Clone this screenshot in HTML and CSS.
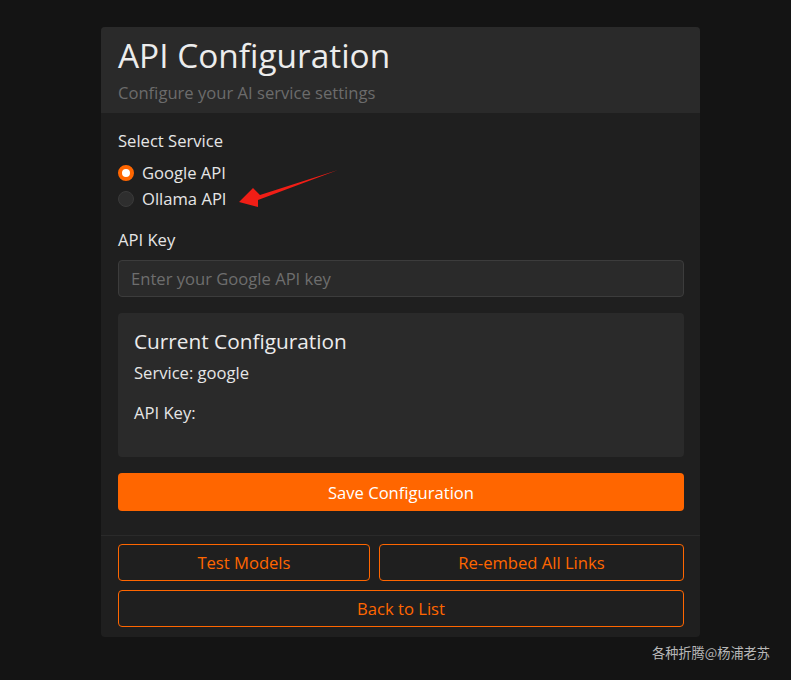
FILE: index.html
```html
<!DOCTYPE html>
<html lang="en">
<head>
<meta charset="utf-8">
<title>API Configuration</title>
<link rel="stylesheet" href="styles.css">
</head>
<body>
<div class="card">
  <div class="card-header">
    <h1 class="title">API Configuration</h1>
    <p class="subtitle">Configure your AI service settings</p>
  </div>
  <div class="card-body">
    <div class="label">Select Service</div>
    <div class="radios">
      <label class="radio"><span class="dot dot-on"></span>Google API</label>
      <label class="radio"><span class="dot"></span>Ollama API</label>
      <svg class="arrow" width="110" height="40" viewBox="0 0 110 40">
        <polygon points="100,1 22,26 15,19 1,33 20,38 20,31" fill="#f01e16"/>
      </svg>
    </div>
    <div class="label key-label">API Key</div>
    <div class="input">Enter your Google API key</div>
    <div class="config">
      <div class="config-title">Current Configuration</div>
      <div class="config-line">Service: google</div>
      <div class="config-line">API Key:</div>
    </div>
    <button class="btn-save">Save Configuration</button>
  </div>
  <div class="card-footer">
    <div class="row">
      <button class="btn-out grow">Test Models</button>
      <button class="btn-out grow">Re-embed All Links</button>
    </div>
    <button class="btn-out full">Back to List</button>
  </div>
</div>
<div class="watermark">各种折腾@杨浦老苏</div>
</body>
</html>
```
FILE: styles.css
```css
* { box-sizing: border-box; }
html, body { margin: 0; padding: 0; }
body {
  background: #141414;
  font-family: "Open Sans", "Noto Sans", sans-serif;
  color: #e6e6e6;
  width: 791px;
  height: 680px;
  overflow: hidden;
  position: relative;
}
.card {
  margin: 27px 0 0 101px;
  width: 599px;
  background: #1f1f1f;
  border-radius: 4px;
  overflow: hidden;
}
.card-header {
  background: #2a2a2a;
  height: 86px;
  padding: 8px 17px 0;
}
.title {
  margin: 0;
  font-size: 33.4px;
  font-weight: 400;
  line-height: 40px;
  color: #ececec;
}
.subtitle {
  margin: 8px 0 0;
  font-size: 16.6px;
  line-height: 20px;
  color: #6c6c6c;
}
.card-body {
  padding: 17px 16px 24px 17px;
  border-bottom: 1px solid #2a2a2a;
}
.label {
  font-size: 16.6px;
  line-height: 22px;
  color: #e6e6e6;
}
.radios {
  position: relative;
  margin-top: 8px;
}
.radio {
  display: flex;
  align-items: center;
  font-size: 16.6px;
  line-height: 26px;
  color: #e6e6e6;
}
.dot {
  width: 16px;
  height: 16px;
  border-radius: 50%;
  background: #2e2e2e;
  border: 1px solid #3a3a3a;
  margin-right: 8px;
}
.dot-on {
  background: #fff;
  border: 4px solid #ff6600;
}
.arrow {
  position: absolute;
  left: 120px;
  top: 9px;
}
.key-label { margin-top: 17px; }
.input {
  margin-top: 9px;
  height: 37px;
  border: 1px solid #3c3c3c;
  border-radius: 4px;
  background: #2a2a2a;
  padding: 0 12px;
  line-height: 35px;
  font-size: 16.6px;
  color: #6e6e6e;
}
.config {
  margin-top: 16px;
  background: #2a2a2a;
  border-radius: 4px;
  height: 144px;
  padding: 14px 16px;
}
.config-title {
  font-size: 20.8px;
  line-height: 28px;
  color: #ececec;
}
.config-line {
  font-size: 16.6px;
  line-height: 22px;
  margin-top: 7px;
  color: #e6e6e6;
}
.config-line + .config-line { margin-top: 18px; }
.btn-save {
  display: block;
  width: 100%;
  margin-top: 16px;
  height: 38px;
  border: none;
  border-radius: 4px;
  background: #ff6600;
  color: #fff;
  font-family: inherit;
  font-size: 16.6px;
}
.card-footer {
  padding: 8px 16px 10px 17px;
}
.row {
  display: flex;
  gap: 9px;
}
.btn-out {
  height: 37px;
  background: transparent;
  border: 1px solid #ff6600;
  border-radius: 4px;
  color: #ff6600;
  font-family: inherit;
  font-size: 16.6px;
  padding: 0 16px;
}
.grow { flex: 1 1 auto; }
.full {
  display: block;
  width: 100%;
  margin-top: 9px;
}
.watermark {
  position: absolute;
  left: 652px;
  top: 643px;
  font-family: "Noto Sans CJK SC", sans-serif;
  font-size: 13.2px;
  line-height: 20px;
  color: #b8b8b8;
}
```
